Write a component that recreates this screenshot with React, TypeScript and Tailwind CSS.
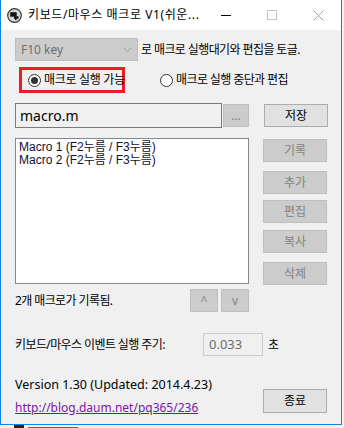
import React from 'react';

const font = "font-['Noto_Sans','Noto_Sans_CJK_KR',sans-serif]";

const WinButton = ({ label, disabled, className = '' }: { label: string; disabled?: boolean; className?: string }) => (
    <div
        className={`flex items-center justify-center border text-[12px] leading-none ${
            disabled ? 'bg-[#cccccc] border-[#bfbfbf] text-[#838383]' : 'bg-[#e1e1e1] border-[#adadad] text-black'
        } ${className}`}
    >
        {label}
    </div>
);

const Radio = ({ checked }: { checked?: boolean }) => (
    <div className="w-[13px] h-[13px] rounded-full border border-[#333333] bg-white flex items-center justify-center shrink-0">
        {checked && <div className="w-[7px] h-[7px] rounded-full bg-[#333333]" />}
    </div>
);

const AppIcon = () => (
    <svg width="15" height="15" viewBox="0 0 15 15">
        <circle cx="7.5" cy="7.5" r="6.8" fill="#d8d8d8" stroke="#333" strokeWidth="1.2" />
        <rect x="3.2" y="4.2" width="6.5" height="4.5" fill="#111" />
        <path d="M7 8.2 L11.5 8.2 L11.5 10.8 L9.5 10.8 L9.5 12 L8 12 L8 10.8 L7 10.8 Z" fill="#111" />
    </svg>
);

export default function App() {
    return (
        <div className={`w-[344px] h-[428px] bg-[#f2f2f2] overflow-hidden ${font}`}>
            <div className="w-[342px] border-l border-r border-b border-[#1883d7] flex flex-col">
                {/* title bar */}
                <div className="h-[30px] bg-white flex items-center">
                    <div className="ml-[6px] mr-[6px] flex items-center shrink-0"><AppIcon /></div>
                    <span className="text-[12px] text-black tracking-[0.6px] whitespace-nowrap min-w-0 overflow-hidden">키보드/마우스 매크로 V1(쉬운...</span>
                    <div className="ml-auto flex items-center h-full shrink-0">
                        <div className="w-[46px] h-full flex items-center justify-center shrink-0">
                            <div className="w-[10px] h-[1px] border-t border-black" />
                        </div>
                        <div className="w-[46px] h-full flex items-center justify-center shrink-0">
                            <div className="w-[10px] h-[10px] border border-[#c6c6c6]" />
                        </div>
                        <div className="w-[46px] h-full flex items-center justify-center shrink-0">
                            <svg width="11" height="11" viewBox="0 0 11 11">
                                <path d="M0.5 0.5 L10.5 10.5 M10.5 0.5 L0.5 10.5" stroke="#a8a8a8" strokeWidth="1" />
                            </svg>
                        </div>
                    </div>
                </div>

                {/* body */}
                <div className="h-[394px] bg-[#f0f0f0] pl-[14px] text-[12px] text-black">
                    <div className="flex items-center mt-[8px] h-[23px]">
                        <div className="w-[123px] h-[23px] bg-[#cccccc] border border-[#bfbfbf] flex items-center pl-[5px] text-[#6d6d6d]">
                            <span>F10 key</span>
                            <svg className="ml-auto mr-[5px]" width="9" height="6" viewBox="0 0 9 6">
                                <path d="M0.5 0.5 L4.5 4.5 L8.5 0.5" fill="none" stroke="#a0a0a0" />
                            </svg>
                        </div>
                        <span className="ml-[3px] tracking-[-0.6px]">로 매크로 실행대기와 편집을 토글.</span>
                    </div>

                    <div className="flex items-center mt-[6px]">
                        <div className="ml-[4px] w-[106px] h-[26px] border-[3px] border-[#ed1c24] flex items-center pl-[6px] gap-[3px]">
                            <Radio checked />
                            <span className="tracking-[-0.3px] whitespace-nowrap">매크로 실행 가능</span>
                        </div>
                        <div className="ml-[35px] flex items-center gap-[3px]">
                            <Radio />
                            <span className="tracking-[-0.6px] whitespace-nowrap">매크로 실행 중단과 편집</span>
                        </div>
                    </div>

                    <div className="flex items-center mt-[10px]">
                        <div className="w-[207px] h-[25px] border border-[#7a7a7a] bg-[#f0f0f0] flex items-center pl-[4px] text-[14px]">
                            macro.m
                        </div>
                        <WinButton label="..." disabled className="w-[26px] h-[23px] ml-px text-[#9a9a9a]" />
                        <WinButton label="저장" className="w-[64px] h-[23px] ml-[15px]" />
                    </div>

                    <div className="flex mt-[10px]">
                        <div className="w-[234px] h-[146px] bg-white border border-[#828790] pl-[3px] pt-[2px] text-[12px] text-[#101030] font-['Liberation_Sans','Noto_Sans_CJK_KR',sans-serif]">
                            <div className="h-[13px] leading-[13px]">Macro 1 (F2누름 / F3누름)</div>
                            <div className="h-[13px] leading-[13px]">Macro 2 (F2누름 / F3누름)</div>
                        </div>
                        <div className="ml-[14px] flex flex-col">
                            <WinButton label="기록" disabled className="w-[64px] h-[23px] mt-px" />
                            <WinButton label="추가" disabled className="w-[64px] h-[23px] mt-[9px]" />
                            <WinButton label="편집" disabled className="w-[64px] h-[23px] mt-[6px]" />
                            <WinButton label="복사" disabled className="w-[64px] h-[23px] mt-[7px]" />
                            <WinButton label="삭제" disabled className="w-[64px] h-[23px] mt-[9px]" />
                        </div>
                    </div>

                    <div className="flex items-center mt-[4px] h-[23px]">
                        <span className="tracking-[-0.6px] w-[175px]">2개 매크로가 기록됨.</span>
                        <WinButton label="^" disabled className="w-[28px] h-[23px]" />
                        <WinButton label="v" disabled className="w-[28px] h-[23px] ml-[3px]" />
                    </div>

                    <div className="flex items-center mt-[21px] h-[23px]">
                        <span className="tracking-[-0.6px] w-[188px]">키보드/마우스 이벤트 실행 주기:</span>
                        <div className="w-[60px] h-[23px] border border-[#cccccc] bg-[#f0f0f0] flex items-center pl-[5px] text-[13px] text-[#6d6d6d]">
                            0.033
                        </div>
                        <span className="ml-[5px]">초</span>
                    </div>

                    <div className="flex mt-[20px]">
                        <div className="flex flex-col w-[248px]">
                            <span className="text-[12.5px] leading-[20px] mt-[-1px]">Version 1.30 (Updated: 2014.4.23)</span>
                            <span className="text-[12px] leading-[20px] mt-[3px] text-[#7a16a6] underline">http://blog.daum.net/pq365/236</span>
                        </div>
                        <WinButton label="종료" className="w-[64px] h-[24px] mt-[13px]" />
                    </div>
                </div>
            </div>
            <div className="h-[3px] ml-[14px] flex gap-[4px]">
                <div className="w-[10px] h-full bg-[#222]" />
                <div className="w-[50px] h-[1px] mt-[2px] bg-[#666]" />
            </div>
        </div>
    );
}
